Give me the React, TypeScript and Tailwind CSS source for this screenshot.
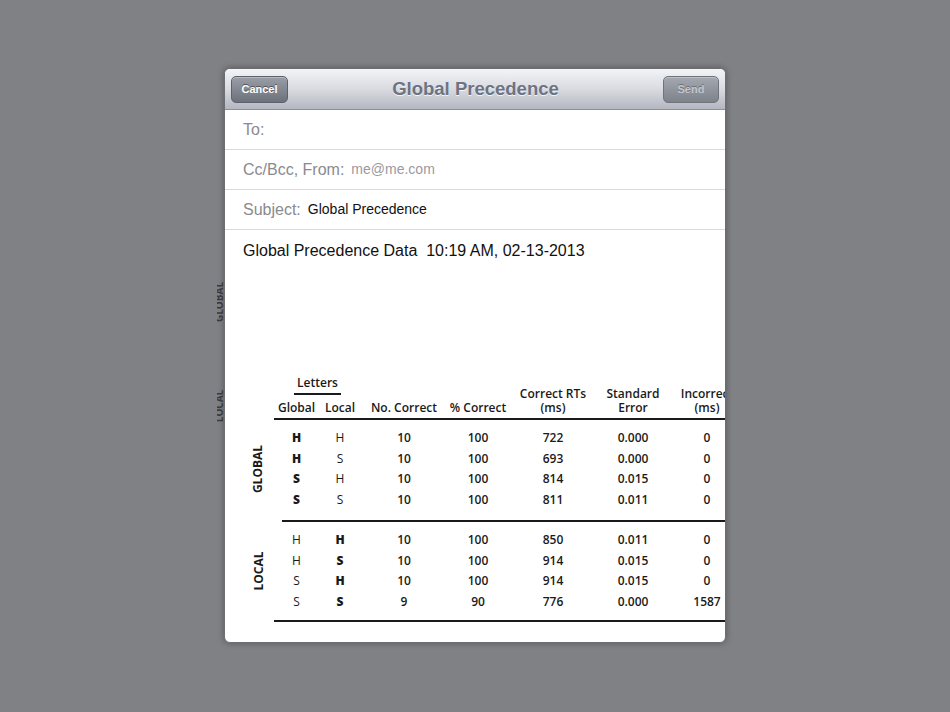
import React from 'react';

type Row = { g: string; l: string; n: string; p: string; rt: string; se: string; inc: string };

const globalRows: Row[] = [
  { g: 'H', l: 'H', n: '10', p: '100', rt: '722', se: '0.000', inc: '0' },
  { g: 'H', l: 'S', n: '10', p: '100', rt: '693', se: '0.000', inc: '0' },
  { g: 'S', l: 'H', n: '10', p: '100', rt: '814', se: '0.015', inc: '0' },
  { g: 'S', l: 'S', n: '10', p: '100', rt: '811', se: '0.011', inc: '0' },
];

const localRows: Row[] = [
  { g: 'H', l: 'H', n: '10', p: '100', rt: '850', se: '0.011', inc: '0' },
  { g: 'H', l: 'S', n: '10', p: '100', rt: '914', se: '0.015', inc: '0' },
  { g: 'S', l: 'H', n: '10', p: '100', rt: '914', se: '0.015', inc: '0' },
  { g: 'S', l: 'S', n: '9', p: '90', rt: '776', se: '0.000', inc: '1587' },
];

const cols = 'grid grid-cols-[45px_42px_86px_62px_88px_72px_76px] text-center';

function Group({ label, rows, boldLocal, pb }: { label: string; rows: Row[]; boldLocal: boolean; pb: string }) {
  return (
    <div className={`flex pt-[8px] ${pb}`}>
      <div className="w-[31px] shrink-0 flex items-center justify-center">
        <span className="-rotate-90 font-bold whitespace-nowrap">{label}</span>
      </div>
      <div className="flex flex-col">
        {rows.map((r, i) => (
          <div key={i} className={`${cols} h-[20.5px] items-center`}>
            <span className={boldLocal ? 'font-normal' : 'font-extrabold'}>{r.g}</span>
            <span className={boldLocal ? 'font-extrabold' : 'font-normal'}>{r.l}</span>
            <span>{r.n}</span>
            <span>{r.p}</span>
            <span>{r.rt}</span>
            <span>{r.se}</span>
            <span>{r.inc}</span>
          </div>
        ))}
      </div>
    </div>
  );
}

function FieldRow({ label, value, dark }: { label: string; value?: string; dark?: boolean }) {
  return (
    <div className="h-[40px] flex items-center gap-[7px] border-b border-[#d9d9dc] pl-[18px] shrink-0">
      <span className="text-[16px] text-[#8a8a8f]">{label}</span>
      {value && (
        <span className={`text-[14px] ${dark ? 'text-[#111]' : 'text-[#9a9a9f]'}`}>{value}</span>
      )}
    </div>
  );
}

export default function App() {
  return (
    <div className="w-[950px] h-[712px] bg-[#808185] flex items-start justify-center pt-[68px] overflow-hidden font-['Liberation_Sans',Arial,sans-serif]">
      <div className="relative">
        {/* ghost labels peeking out on the left edge */}
        <div className="absolute z-10 left-[-7px] top-0 w-[7px] h-[400px] overflow-hidden text-[10px] font-bold text-[#3a3a3d] font-['Open_Sans',sans-serif] leading-[14px]">
          <span className="absolute left-[-19px] top-[227px] w-[42px] text-center -rotate-90">GLOBAL</span>
          <span className="absolute left-[-15px] top-[331px] w-[34px] text-center -rotate-90">LOCAL</span>
        </div>

        <div className="w-[502px] h-[575px] bg-white rounded-[6px] overflow-hidden flex flex-col shadow-[0_0_6px_rgba(0,0,0,0.35)] border border-[#6d6e72]">
          {/* Nav bar */}
          <div className="h-[41px] shrink-0 flex items-center justify-between px-[6px] bg-gradient-to-b from-[#f3f4f7] via-[#d9dbe1] to-[#b4b7c1] border-b border-[#8d9099]">
            <button className="w-[57px] h-[27px] rounded-[5px] border border-[#5d616a] bg-gradient-to-b from-[#9a9ea7] to-[#6c717b] shadow-[inset_0_1px_0_rgba(255,255,255,0.3)] text-[11px] font-bold text-white [text-shadow:0_-1px_0_rgba(0,0,0,0.45)]">
              Cancel
            </button>
            <div className="text-[18.5px] font-bold text-[#6c7383] [text-shadow:0_1px_0_rgba(255,255,255,0.8)]">
              Global Precedence
            </div>
            <button className="w-[56px] h-[27px] rounded-[5px] border border-[#6f737c] bg-gradient-to-b from-[#a4a8b0] to-[#7d828b] shadow-[inset_0_1px_0_rgba(255,255,255,0.3)] text-[11px] font-bold text-[#c3c6cc] [text-shadow:0_-1px_0_rgba(0,0,0,0.3)]">
              Send
            </button>
          </div>

          <FieldRow label="To:" />
          <FieldRow label="Cc/Bcc, From:" value="me@me.com" />
          <FieldRow label="Subject:" value="Global Precedence" dark />

          {/* Body */}
          <div className="flex-1 flex flex-col pl-[18px] pt-[11px]">
            <div className="text-[16px] text-[#111] leading-[20px]">
              Global Precedence Data&nbsp;&nbsp;10:19 AM, 02-13-2013
            </div>

            {/* Table */}
            <div className="mt-[115px] flex flex-col w-[508px] shrink-0 text-[12px] leading-[14px] text-[#1a1a1a] font-['Open_Sans',sans-serif] font-semibold">
              {/* header */}
              <div className="flex items-end h-[42px] pb-[3px] pl-[31px]">
                <div className="w-[87px] flex flex-col items-center">
                  <span>Letters</span>
                  <div className="w-[47px] h-[2px] bg-[#1a1a1a] mt-[3px]" />
                  <div className="grid grid-cols-[45px_42px] text-center mt-[6px]">
                    <span>Global</span>
                    <span>Local</span>
                  </div>
                </div>
                <div className="grid grid-cols-[86px_62px_88px_72px_76px] text-center items-end">
                  <span>No. Correct</span>
                  <span>% Correct</span>
                  <span>
                    Correct RTs
                    <br />
                    (ms)
                  </span>
                  <span>
                    Standard
                    <br />
                    Error
                  </span>
                  <span className="whitespace-nowrap">
                    Incorrect
                    <br />
                    (ms)
                  </span>
                </div>
              </div>
              <div className="h-[2px] bg-[#1a1a1a] ml-[31px]" />
              <Group label="GLOBAL" rows={globalRows} boldLocal={false} pb="pb-[10px]" />
              <div className="h-[2px] bg-[#1a1a1a] ml-[39px]" />
              <Group label="LOCAL" rows={localRows} boldLocal pb="pb-[8px]" />
              <div className="h-[2px] bg-[#1a1a1a] ml-[31px]" />
            </div>
          </div>
        </div>
      </div>
    </div>
  );
}
